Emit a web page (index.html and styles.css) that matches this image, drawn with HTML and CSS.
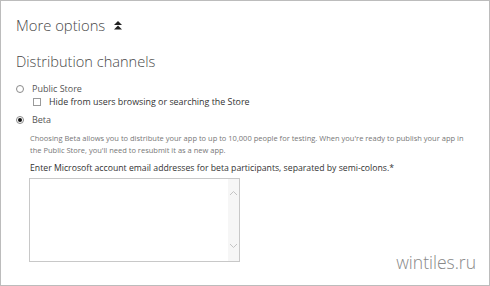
FILE: index.html
```html
<!DOCTYPE html>
<html lang="en">
  <head>
    <meta charset="UTF-8" />
    <title>More options</title>
    <link rel="stylesheet" href="styles.css">
  </head>
  <body>
    <div class="frame">
      <h2 class="toggle">
        More options
        <svg class="toggle-icon" width="8" height="9" viewBox="0 0 8 9">
          <path d="M4 0 L8 4 L0 4 Z M4 4.5 L8 8.5 L0 8.5 Z" fill="#222" />
        </svg>
      </h2>

      <h3 class="section-title">Distribution channels</h3>

      <div class="options">
        <label class="radio-row">
          <span class="radio"></span>
          <span>Public Store</span>
        </label>
        <label class="check-row">
          <span class="checkbox"></span>
          <span>Hide from users browsing or searching the Store</span>
        </label>
        <label class="radio-row beta-row">
          <span class="radio checked"></span>
          <span>Beta</span>
        </label>
      </div>

      <div class="beta">
        <p class="desc">
          Choosing Beta allows you to distribute your app to up to 10,000 people for testing. When you're ready to publish your app in<br>
          the Public Store, you'll need to resubmit it as a new app.
        </p>
        <p class="field-label">Enter Microsoft account email addresses for beta participants, separated by semi-colons.*</p>
        <div class="textbox">
          <div class="scroll">
            <svg width="9" height="6" viewBox="0 0 9 6"><path d="M1 5 L4.5 1.5 L8 5" fill="none" stroke="#c4c4c4" stroke-width="1" /></svg>
            <svg width="9" height="6" viewBox="0 0 9 6"><path d="M1 1 L4.5 4.5 L8 1" fill="none" stroke="#c4c4c4" stroke-width="1" /></svg>
          </div>
        </div>
      </div>

      <div class="watermark">wintiles.ru</div>
    </div>
  </body>
</html>
```

FILE: styles.css
```css
body {
  margin: 0;
  font-family: "Open Sans", "Noto Sans", sans-serif;
  color: #333;
  background: #fff;
}
.frame {
  position: relative;
  width: 490px;
  height: 286px;
  box-sizing: border-box;
  border: 1px solid #bcbcbc;
  padding: 0 0 0 15px;
}
.toggle {
  margin: 13px 0 0;
  font-size: 14.8px;
  font-weight: 300;
  color: #484848;
  display: flex;
  align-items: center;
  gap: 9px;
  line-height: 22px;
}
.section-title {
  margin: 14px 0 0;
  font-size: 14.6px;
  font-weight: 300;
  color: #484848;
  line-height: 22px;
}
.options {
  margin-top: 11px;
  font-size: 9px;
  color: #555;
}
.radio-row {
  display: flex;
  align-items: center;
  gap: 8px;
  height: 12px;
  line-height: 12px;
}
.beta-row {
  margin-top: 6px;
}
.check-row {
  display: flex;
  align-items: center;
  gap: 8px;
  height: 12px;
  line-height: 12px;
  margin-top: 1px;
  padding-left: 17px;
  font-size: 8.9px;
  color: #333;
}
.radio {
  width: 6px;
  height: 6px;
  border: 1px solid #8a8a8a;
  border-radius: 50%;
  position: relative;
}
.radio.checked::after {
  content: "";
  position: absolute;
  left: 1px;
  top: 1px;
  width: 4px;
  height: 4px;
  border-radius: 50%;
  background: #111;
}
.checkbox {
  width: 6px;
  height: 6px;
  border: 1px solid #9a9a9a;
}
.beta {
  padding-left: 14px;
  margin-top: 6px;
}
.desc {
  margin: 0;
  font-size: 7.5px;
  line-height: 12px;
  color: #777;
  white-space: nowrap;
}
.field-label {
  margin: 6px 0 0;
  font-size: 8.7px;
  line-height: 12px;
  color: #333;
}
.textbox {
  margin: 4px 0 0 -1px;
  width: 211px;
  height: 84px;
  box-sizing: border-box;
  border: 1px solid #c8c8c8;
  display: flex;
  justify-content: flex-end;
}
.scroll {
  width: 11px;
  background: #f6f6f6;
  display: flex;
  flex-direction: column;
  align-items: center;
  justify-content: space-between;
  padding: 11px 0 12px;
}
.watermark {
  position: absolute;
  right: 13px;
  bottom: 11px;
  font-size: 17.5px;
  font-weight: 300;
  color: #888;
}
```
